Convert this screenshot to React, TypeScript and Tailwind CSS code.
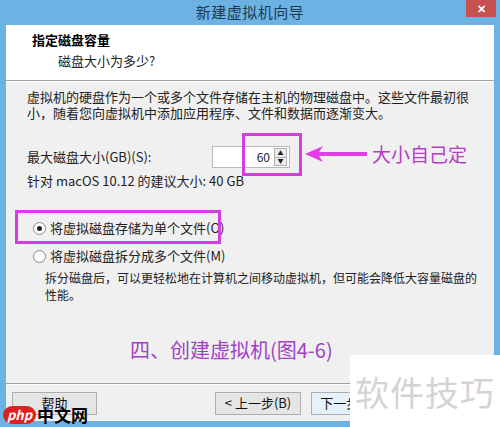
import React from 'react';

const font = { fontFamily: '"Noto Sans CJK SC", "Noto Sans", sans-serif' };

const Radio: React.FC<{ checked?: boolean; label: string }> = ({ checked = false, label }) => (
  <div className="flex items-center gap-[4px] h-[16px]">
    <span className="w-[13px] h-[13px] rounded-full border border-[#8a8a8a] bg-white flex items-center justify-center shrink-0">
      {checked && <span className="w-[5px] h-[5px] rounded-full bg-[#222]" />}
    </span>
    <span>{label}</span>
  </div>
);

const WinButton: React.FC<{ label: string; className?: string }> = ({ label, className = '' }) => (
  <div className={`h-[23px] border border-[#adadad] bg-[#e5e5e5] flex items-center justify-center text-[13px] text-[#111] shrink-0 ${className}`}>
    {label}
  </div>
);

export default function App() {
  return (
    <div className="relative w-[500px] h-[427px] overflow-hidden bg-[#6cb2e2] text-[13px] text-[#222]" style={font}>
      {/* title bar */}
      <div className="relative h-[25px] flex items-center justify-center">
        <span className="text-[15px] text-[#1d3a55] tracking-[0.5px]">新建虚拟机向导</span>
        <div className="absolute right-[4px] top-0 w-[30px] h-[17px] bg-[#c75050] flex items-center justify-center text-white text-[11px] font-bold">
          ✕
        </div>
      </div>

      {/* client area */}
      <div className="mx-[6px] h-[396px] flex flex-col bg-[#f0f0f0]">
        <div className="h-[56px] bg-white border-b border-[#a0a0a0] pl-[26px] pt-[3px]">
          <div className="font-bold text-[13px] leading-[24px] text-black">指定磁盘容量</div>
          <div className="pl-[26px] leading-[18px]">磁盘大小为多少?</div>
        </div>
        <div className="h-px bg-white" />

        <div className="flex-1 flex flex-col pl-[21px] pt-[7px]">
          <p className="leading-[16px] w-[450px]">
            虚拟机的硬盘作为一个或多个文件存储在主机的物理磁盘中。这些文件最初很小，随着您向虚拟机中添加应用程序、文件和数据而逐渐变大。
          </p>

          <div className="flex items-center mt-[25px] h-[22px]">
            <span className="w-[185px]">最大磁盘大小(GB)(S):</span>
            <div className="w-[78px] h-[22px] bg-white border border-[#b9b9b9] flex items-center justify-end">
              <span className="mr-[4px] text-[12px]">60</span>
              <div className="w-[13px] h-[18px] mr-[2px] border border-[#b0b0b0] bg-[#ececec] flex flex-col">
                <span className="flex-1 flex items-center justify-center text-[6px] leading-none border-b border-[#b0b0b0]">▲</span>
                <span className="flex-1 flex items-center justify-center text-[6px] leading-none">▼</span>
              </div>
            </div>
          </div>
          <div className="mt-[5px] leading-[16px]">针对 macOS 10.12 的建议大小: 40 GB</div>

          <div className="mt-[31px] pl-[6px] flex flex-col gap-[12px]">
            <Radio checked label="将虚拟磁盘存储为单个文件(O)" />
            <Radio label="将虚拟磁盘拆分成多个文件(M)" />
          </div>
          <div className="mt-[5px] ml-[18px] text-[12px] leading-[17px] whitespace-nowrap">
            <div>拆分磁盘后，可以更轻松地在计算机之间移动虚拟机，但可能会降低大容量磁盘的</div>
            <div>性能。</div>
          </div>
        </div>

        <div className="h-px bg-[#a0a0a0]" />
        <div className="h-px bg-white" />
        <div className="h-[36px] flex items-center px-[6px]">
          <WinButton label="帮助" className="w-[85px]" />
          <WinButton label="< 上一步(B)" className="w-[86px] ml-[118px]" />
          <WinButton label="下一步(N) >" className="w-[86px] ml-[10px] border-[#3c7fb1] bg-[#e5f1fb]" />
        </div>
      </div>

      {/* annotations */}
      <div className="absolute left-[242px] top-[133px] w-[60px] h-[43px] border-[3px] border-[#d23ee0]" />
      <svg className="absolute left-[305px] top-[145px]" width="62" height="18" viewBox="0 0 62 18">
        <polygon points="0,9 18,1 14,7 62,7 62,11 14,11 18,17" fill="#e33de6" />
      </svg>
      <div className="absolute left-[372px] top-[141px] text-[19px] text-[#b63cc8] leading-[26px]">大小自己定</div>
      <div className="absolute left-[15px] top-[210px] w-[206px] h-[34px] border-[3px] border-[#d23ee0]" />
      <div className="absolute left-[130px] top-[336px] text-[20px] text-[#a040c8] leading-[28px]">四、创建虚拟机(图4-6)</div>

      {/* watermarks */}
      <div className="absolute left-[350px] top-[355px] w-[150px] h-[72px] bg-white flex items-center justify-center">
        <span className="text-[34px] text-[#d4d4d4] tracking-[1px]">软件技巧</span>
      </div>
      <div className="absolute left-[3px] top-[405px] flex items-center">
        <span className="px-[4px] h-[18px] rounded-full bg-[#e02020] text-white text-[13px] leading-[18px] italic font-bold">php</span>
        <span className="text-[17px] leading-[20px] text-black font-bold ml-[1px]">中文网</span>
      </div>
    </div>
  );
}
